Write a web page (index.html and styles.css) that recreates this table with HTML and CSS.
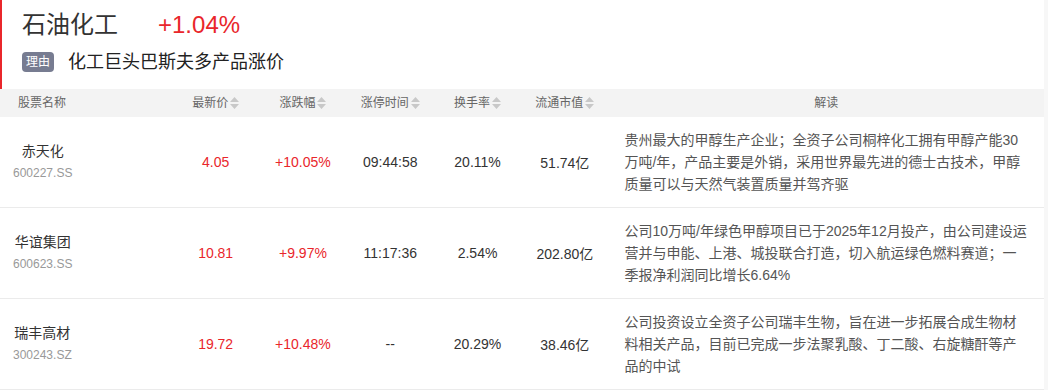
FILE: index.html
```html
<!DOCTYPE html>
<html lang="zh-CN">
<head>
<meta charset="utf-8">
<title>石油化工</title>
<link rel="stylesheet" href="styles.css">
</head>
<body>
<div class="page">
  <section class="topic">
    <div class="topic-title">
      <span class="topic-name">石油化工</span>
      <span class="topic-change">+1.04%</span>
    </div>
    <div class="topic-reason">
      <span class="tag">理由</span>
      <span class="reason-text">化工巨头巴斯夫多产品涨价</span>
    </div>
  </section>

  <div class="table">
    <div class="row head">
      <div class="cell name-cell head-name">股票名称</div>
      <div class="cell">最新价<svg class="sort" viewBox="0 0 9 12"><path d="M4.5 0 L9 5 L0 5 Z M0 7 L9 7 L4.5 12 Z"/></svg></div>
      <div class="cell">涨跌幅<svg class="sort" viewBox="0 0 9 12"><path d="M4.5 0 L9 5 L0 5 Z M0 7 L9 7 L4.5 12 Z"/></svg></div>
      <div class="cell">涨停时间<svg class="sort" viewBox="0 0 9 12"><path d="M4.5 0 L9 5 L0 5 Z M0 7 L9 7 L4.5 12 Z"/></svg></div>
      <div class="cell">换手率<svg class="sort" viewBox="0 0 9 12"><path d="M4.5 0 L9 5 L0 5 Z M0 7 L9 7 L4.5 12 Z"/></svg></div>
      <div class="cell">流通市值<svg class="sort" viewBox="0 0 9 12"><path d="M4.5 0 L9 5 L0 5 Z M0 7 L9 7 L4.5 12 Z"/></svg></div>
      <div class="cell">解读</div>
    </div>

    <div class="row body">
      <div class="cell name-cell"><div class="stock"><span class="stock-name">赤天化</span><span class="stock-code">600227.SS</span></div></div>
      <div class="cell up">4.05</div>
      <div class="cell up">+10.05%</div>
      <div class="cell">09:44:58</div>
      <div class="cell">20.11%</div>
      <div class="cell">51.74亿</div>
      <div class="cell desc">贵州最大的甲醇生产企业；全资子公司桐梓化工拥有甲醇产能30万吨/年，产品主要是外销，采用世界最先进的德士古技术，甲醇质量可以与天然气装置质量并驾齐驱</div>
    </div>

    <div class="row body">
      <div class="cell name-cell"><div class="stock"><span class="stock-name">华谊集团</span><span class="stock-code">600623.SS</span></div></div>
      <div class="cell up">10.81</div>
      <div class="cell up">+9.97%</div>
      <div class="cell">11:17:36</div>
      <div class="cell">2.54%</div>
      <div class="cell">202.80亿</div>
      <div class="cell desc">公司10万吨/年绿色甲醇项目已于2025年12月投产，由公司建设运营并与申能、上港、城投联合打造，切入航运绿色燃料赛道；一季报净利润同比增长6.64%</div>
    </div>

    <div class="row body">
      <div class="cell name-cell"><div class="stock"><span class="stock-name">瑞丰高材</span><span class="stock-code">300243.SZ</span></div></div>
      <div class="cell up">19.72</div>
      <div class="cell up">+10.48%</div>
      <div class="cell">--</div>
      <div class="cell">20.29%</div>
      <div class="cell">38.46亿</div>
      <div class="cell desc">公司投资设立全资子公司瑞丰生物，旨在进一步拓展合成生物材料相关产品，目前已完成一步法聚乳酸、丁二酸、右旋糖酐等产品的中试</div>
    </div>
  </div>
</div>
</body>
</html>
```

FILE: styles.css
```css
* {
  box-sizing: border-box;
}

html, body {
  margin: 0;
  padding: 0;
}

body {
  background: #f7f7f7;
  font-family: "Liberation Sans", "Noto Sans CJK SC", Arial, sans-serif;
  color: #333;
}

.page {
  width: 1044px;
  background: #fff;
}

.topic {
  height: 89px;
  border-left: 2px solid #e9262b;
  padding: 9px 0 0 20px;
}

.topic-title {
  display: flex;
  align-items: center;
  height: 32px;
  font-size: 24px;
  line-height: 32px;
}

.topic-name {
  color: #333;
}

.topic-change {
  color: #e9262b;
  margin-left: 40px;
}

.topic-reason {
  display: flex;
  align-items: center;
  margin-top: 11px;
  height: 20px;
}

.tag {
  display: inline-flex;
  align-items: center;
  justify-content: center;
  width: 32px;
  height: 20px;
  border-radius: 4px;
  background: #777c91;
  color: #fff;
  font-size: 12px;
  line-height: 20px;
}

.reason-text {
  margin-left: 14px;
  font-size: 18px;
  color: #222;
  line-height: 24px;
}

.table {
  width: 1044px;
}

.row {
  display: grid;
  grid-template-columns: 172px repeat(5, 87.3px) 1fr;
}

.row.head {
  height: 28px;
  background: #f3f3f3;
  font-size: 12px;
  color: #666;
}

.row.body {
  height: 91px;
  border-bottom: 1px solid #ebebeb;
  font-size: 14px;
  color: #333;
}

.cell {
  display: flex;
  align-items: center;
  justify-content: center;
  white-space: nowrap;
}

.head .cell {
  line-height: 28px;
}

.sort {
  width: 9px;
  height: 12px;
  margin-left: 2px;
  fill: #c8c8c8;
}

.name-cell {
  justify-content: flex-start;
}

.head-name {
  padding-left: 18px;
}

.body .name-cell {
  padding-left: 13px;
}

.stock {
  display: flex;
  flex-direction: column;
  align-items: center;
}

.stock-name {
  font-size: 14px;
  line-height: 22px;
  color: #333;
}

.stock-code {
  font-size: 12px;
  line-height: 22px;
  color: #999;
}

.up {
  color: #e9262b;
}

.desc {
  justify-content: flex-start;
  white-space: normal;
  padding: 0 14px 0 16px;
  font-size: 14px;
  line-height: 22px;
  color: #555;
  text-align: left;
}
```
